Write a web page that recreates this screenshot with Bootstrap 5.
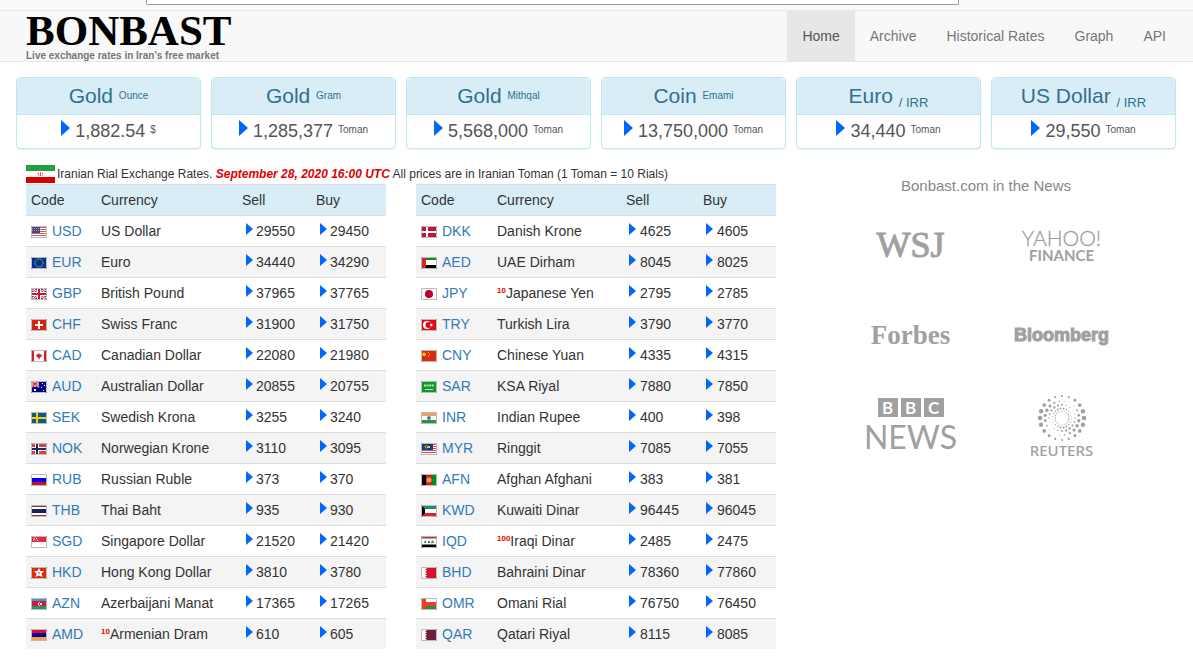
<!DOCTYPE html>
<html lang="en">
<head>
<meta charset="utf-8">
<meta name="viewport" content="width=device-width, initial-scale=1">
<title>Bonbast - Live exchange rates in Iran's free market</title>
<link href="https://cdn.jsdelivr.net/npm/bootstrap@5.3.0/dist/css/bootstrap.min.css" rel="stylesheet">
<style>
body { font: 14px/20px "Liberation Sans", Arial, sans-serif; color: #333; background: #fff; }
a { text-decoration: none; color: #337ab7; }
.page { padding: 0 12px 0 11px; }
.topstrip { height: 10px; background: #f9f9fb; }
.topstrip div { height: 5px; margin: 0 234px 0 146px; background: #fff; border: 1px solid #999; border-top: 0; border-radius: 0 0 2px 2px; }
.site-nav { background: #f8f8f8; border: solid #e7e7e7; border-width: 1px 0; }
.site-nav .nav-link { padding: 15px; color: #777; }
.site-nav .nav-link.active { background: #e7e7e7; color: #555; }
.brand { color: #000; padding-left: 15px; }
.brand:hover { color: #000; }
.brand-name { font: bold 43px/39px "Liberation Serif", serif; }
.brand-tag { font-size: 10px; line-height: 11px; font-weight: bold; color: #777; }
.rates { padding-top: 15px; }
.rates > div { padding: 0 5px; }
.rate { border: 1px solid #bce8f1; border-radius: 4px; box-shadow: 0 1px 1px rgba(0,0,0,.05); text-align: center; white-space: nowrap; }
.rate .card-header { background: #d9edf7; border-color: #bce8f1; color: #31708f; padding: 0; }
.rate .card-body { padding: 0; font-size: 18px; line-height: 33px; height: 33px; color: #555; }
.rate h2 { font-size: 21px; line-height: 36px; height: 36px; margin: 0; font-weight: normal; }
.hi, .lo { line-height: 10px; vertical-align: 4px; font-size: 10px; }
.lo { vertical-align: -4px; font-size: 13px; }
.tri { fill: #06f; }
.rate .tri { width: 9px; height: 16px; vertical-align: 1px; }
.caption-line { font-size: 12px; line-height: 20px; padding: 0 15px; margin-top: 15px; white-space: nowrap; }
.caption-line svg { width: 29px; height: 18px; margin-right: 2px; }
.caption-line em { color: #e00000; font-weight: bold; }
.gut { padding: 0 15px; }
.fx { table-layout: fixed; margin: 0; color: #333; line-height: 20px; white-space: nowrap; }
.fx > :not(caption) > * > * { padding: 5px; border: 0; border-top: 1px solid #ddd; box-shadow: none; font-weight: normal; color: #333; background: none; }
.fx > thead > tr > th { background: #d9edf7; }
.fx > tbody > tr:nth-child(even) > td { background: #f4f4f4; }
.fx .flag { width: 16px; height: 12px; margin-right: 5px; vertical-align: -2px; }
.fx .tri { width: 7px; height: 12px; margin: 0 3px 0 4px; vertical-align: 1px; }
.fx sup { font-size: 8px; line-height: 8px; color: #e00; font-weight: bold; top: 0; vertical-align: 5px; }
.c-code { width: 70px; } .c-cur { width: 141px; } .c-sell { width: 74px; }
.second .c-code { width: 76px; } .second .c-cur { width: 129px; } .second .c-sell { width: 77px; }
.second .tri { margin: 0 4px 0 3px; }
.news { color: #888; padding-top: 27px; }
.news h3 { font-size: 15px; line-height: 20px; margin: 0; }
.press { display: grid; grid-template-columns: 151px 151px; grid-auto-rows: 90px; justify-content: center; margin-top: 4px; }
.press a { color: #a0a0a0; display: flex; flex-direction: column; align-items: center; justify-content: center; }
.wsj { font: 36px/36px "Liberation Serif", serif; -webkit-text-stroke: 1px #a0a0a0; }
.yahoo { font: 300 21px/20px Lato, sans-serif; -webkit-text-stroke: .3px #a0a0a0; }
.finance { font: bold 15px/15px Lato, sans-serif; }
.forbes { font: bold 27px/28px "Liberation Serif", serif; }
.bloom { font: bold 18px/20px "Liberation Sans", sans-serif; -webkit-text-stroke: 1px #a0a0a0; }
.bbc { gap: 3px; }
.bbc span { width: 20px; background: #a0a0a0; color: #fff; font: bold 17px/19px Lato, sans-serif; text-align: center; }
.bbcnews { font: 32px/32px Lato, sans-serif; margin-top: 4px; }
.reuters { font: 500 15px/14px "Noto Sans", sans-serif; margin-top: 1px; }
</style>
</head>
<body>
<svg class="d-none" xmlns="http://www.w3.org/2000/svg">
  <symbol id="tri" viewBox="0 0 9 16" preserveAspectRatio="none"><path d="M0 0L9 8L0 16z"/></symbol>
  <symbol id="USD" viewBox="0 0 16 12"><path fill="#fff" d="M0 0h16v12H0z"/><path stroke="#d0616d" d="M0 1.5h16M0 3.5h16M0 5.5h16M0 7.5h16M0 9.5h16M0 11.5h16"/><path fill="#454577" d="M0 0h9v7H0z"/><path stroke="#99a" stroke-dasharray="1 1" d="M1 2.5h8M1 4.5h8"/></symbol>
  <symbol id="EUR" viewBox="0 0 16 12"><path fill="#003594" d="M0 0h16v12H0z"/><circle cx="8" cy="6" r="4" fill="none" stroke="#b9a93b" stroke-dasharray="1.5 .6"/></symbol>
  <symbol id="GBP" viewBox="0 0 16 12"><path fill="#284a8c" d="M0 0h16v12H0z"/><path stroke="#fff" stroke-width="2.500" d="M0 0l16 12M16 0L0 12"/><path stroke="#d02a3d" d="M0 0l16 12M16 0L0 12"/><path stroke="#fff" stroke-width="4" d="M8 0v12M0 6h16"/><path stroke="#d0142c" stroke-width="2" d="M8 0v12M0 6h16"/></symbol>
  <symbol id="CHF" viewBox="0 0 16 12"><path fill="#da2010" d="M0 0h16v12H0z"/><path stroke="#fff" stroke-width="2" d="M8 2v8M4 6h8"/></symbol>
  <symbol id="CAD" viewBox="0 0 16 12"><path fill="#fff" d="M0 0h16v12H0z"/><path fill="#e01a1a" d="M0 0h3v12H0zM13 0h3v12h-3zM8 3l1 1.500 2 0-.5 2-2 1.500v1.500h-1V8l-2-1.500L5 4.500l2 0z"/></symbol>
  <symbol id="AUD" viewBox="0 0 16 12"><path fill="#00008b" d="M0 0h16v12H0z"/><path stroke="#fff" stroke-width="2" d="M0 0l8 6M8 0L0 6M4 0v6M0 3h8"/><path stroke="#d22" d="M4 0v6M0 3h8M0 0l8 6M8 0L0 6"/><path fill="#fff" d="M3 8h2v2H3zM11 2h1v1h-1zM13 4h1v1h-1zM10 6h1v1h-1zM12 9h1v1h-1z"/></symbol>
  <symbol id="SEK" viewBox="0 0 16 12"><path fill="#0c5a8f" d="M0 0h16v12H0z"/><path stroke="#fc0" stroke-width="2" d="M6 0v12M0 6h16"/></symbol>
  <symbol id="NOK" viewBox="0 0 16 12"><path fill="#df3b42" d="M0 0h16v12H0z"/><path stroke="#fff" stroke-width="4" d="M6 0v12M0 6h16"/><path stroke="#143069" stroke-width="2" d="M6 0v12M0 6h16"/></symbol>
  <symbol id="RUB" viewBox="0 0 16 12"><path fill="#fff" d="M0 0h16v4H0z"/><path fill="#00f" d="M0 4h16v4H0z"/><path fill="#d40a20" d="M0 8h16v4H0z"/></symbol>
  <symbol id="THB" viewBox="0 0 16 12"><path fill="#fff" d="M0 0h16v12H0z"/><path stroke="#a52438" d="M0 1.500h16M0 10.500h16"/><path fill="#0f245c" d="M0 4h16v4H0z"/></symbol>
  <symbol id="SGD" viewBox="0 0 16 12"><path fill="#fff" d="M0 0h16v12H0z"/><path fill="#e8283c" d="M0 0h16v6H0z"/><path fill="none" stroke="#fff" d="M4 1.500q-3 1.500 0 3"/><path fill="#fff" d="M5 2h1v1H5zM6 4h1v1H6z"/></symbol>
  <symbol id="HKD" viewBox="0 0 16 12"><path fill="#e02a10" d="M0 0h16v12H0z"/><path fill="#fff" d="M8 1l1.500 3 3.500 0-2.500 2.500 1 3.500L8 8.500 4.500 10l1-3.500L3 4l3.500 0z"/><path fill="#e98" d="M7 5h2v2H7z"/></symbol>
  <symbol id="AZN" viewBox="0 0 16 12"><path fill="#2aa7c8" d="M0 0h16v4H0z"/><path fill="#dc1437" d="M0 3h16v5H0z"/><path fill="#26965a" d="M0 8h16v4H0z"/><path fill="none" stroke="#fff" d="M8.500 4.200q-3 1.800 0 3.600"/><path fill="#fff" d="M9 5h2v2H9z"/></symbol>
  <symbol id="AMD" viewBox="0 0 16 12"><path fill="#e01020" d="M0 0h16v4H0z"/><path fill="#0404b4" d="M0 4h16v4H0z"/><path fill="#f4a338" d="M0 8h16v4H0z"/></symbol>
  <symbol id="DKK" viewBox="0 0 16 12"><path fill="#c3143a" d="M0 0h16v12H0z"/><path stroke="#fff" stroke-width="2" d="M6 0v12M0 6h16"/></symbol>
  <symbol id="AED" viewBox="0 0 16 12"><path fill="#fff" d="M0 0h16v12H0z"/><path fill="#058a1c" d="M0 0h16v3H0z"/><path d="M0 8h16v4H0z"/><path fill="#d4232b" d="M0 0h5v12H0z"/></symbol>
  <symbol id="JPY" viewBox="0 0 16 12"><path fill="#fff" d="M0 0h16v12H0z"/><circle cx="8" cy="6" r="4" fill="#bc002d"/></symbol>
  <symbol id="TRY" viewBox="0 0 16 12"><path fill="#e30a17" d="M0 0h16v12H0z"/><circle cx="6" cy="6" r="4" fill="#fff"/><circle cx="7.500" cy="6" r="3" fill="#e30a17"/><path fill="#fff" d="M9 5l1 .3L11 4v1.600l1.500.4-1.500.5V8l-1-1.200L9 7z"/></symbol>
  <symbol id="CNY" viewBox="0 0 16 12"><path fill="#de2910" d="M0 0h16v12H0z"/><path fill="#ffd400" d="M3 2l1 1.500 1.500 0-1 1.500.5 1.500-2-1-1.500 1V4.500l-1-1 1.500 0zM7 2h1v1H7zM8 4h1v1H8zM7 6h1v1H7z"/></symbol>
  <symbol id="SAR" viewBox="0 0 16 12"><path fill="#0b9a2e" d="M0 0h16v12H0z"/><path stroke="#b9e2c0" stroke-width="2" stroke-dasharray="2 .6" d="M3 4.500h10"/><path stroke="#b9e2c0" d="M4 8.500h8"/></symbol>
  <symbol id="INR" viewBox="0 0 16 12"><path fill="#fff" d="M0 0h16v12H0z"/><path fill="#f0a064" d="M0 0h16v4H0z"/><path fill="#27963c" d="M0 8h16v4H0z"/><circle cx="8" cy="6" r="2" fill="#6a70b8"/></symbol>
  <symbol id="MYR" viewBox="0 0 16 12"><path fill="#fff" d="M0 0h16v12H0z"/><path stroke="#e34b55" d="M0 1.500h16M0 3.500h16M0 5.500h16M0 7.500h16M0 9.500h16M0 11.500h16"/><path fill="#103c8c" d="M0 0h12v7H0z"/><path fill="none" stroke="#fc0" d="M5.500 2q-3 1.500 0 3.500"/><path fill="#fc0" d="M6 3h3v2H6z"/></symbol>
  <symbol id="AFN" viewBox="0 0 16 12"><path d="M0 0h5v12H0z"/><path fill="#c9231c" d="M5 0h6v12H5z"/><path fill="#058a1c" d="M11 0h5v12h-5z"/><circle cx="8" cy="6" r="2.500" fill="#e9a35d"/></symbol>
  <symbol id="KWD" viewBox="0 0 16 12"><path fill="#fff" d="M0 0h16v12H0z"/><path fill="#1c8f6c" d="M0 0h16v4H0z"/><path fill="#d8203a" d="M0 8h16v4H0z"/><path d="M0 0l4 4v4l-4 4z"/></symbol>
  <symbol id="IQD" viewBox="0 0 16 12"><path fill="#fff" d="M0 0h16v12H0z"/><path fill="#b8303b" d="M0 0h16v2.500H0z"/><path d="M0 8.500h16V12H0z"/><path fill="#2a9a58" d="M3 6l2-2v3H3zM7 5h2v2H7zM10 6l2-2 1 3h-3z"/></symbol>
  <symbol id="BHD" viewBox="0 0 16 12"><path fill="#fff" d="M0 0h16v12H0z"/><path fill="#d4142c" d="M16 0H4l2 1.200-2 1.200 2 1.200-2 1.200L6 6 4 7.200l2 1.200-2 1.200 2 1.200L4 12h12z"/></symbol>
  <symbol id="OMR" viewBox="0 0 16 12"><path fill="#fff" d="M0 0h16v4H0z"/><path fill="#e8402c" d="M0 0h5v4h11v4H5v4H0z"/><path fill="#2f8a3a" d="M5 8h11v4H5z"/></symbol>
  <symbol id="QAR" viewBox="0 0 16 12"><path fill="#fff" d="M0 0h16v12H0z"/><path fill="#701c40" d="M16 0H4l2 1.200-2 1.200 2 1.200-2 1.200L6 6 4 7.200l2 1.200-2 1.200 2 1.200L4 12h12z"/></symbol>
</svg>

<div class="topstrip"><div></div></div>

<nav class="site-nav">
  <div class="page d-flex justify-content-between">
    <a class="brand" href="#">
      <div class="brand-name">BONBAST</div>
      <div class="brand-tag">Live exchange rates in Iran's free market</div>
    </a>
    <ul class="nav flex-nowrap">
      <li class="nav-item"><a class="nav-link active" aria-current="page" href="#">Home</a></li>
      <li class="nav-item"><a class="nav-link" href="#">Archive</a></li>
      <li class="nav-item"><a class="nav-link" href="#">Historical Rates</a></li>
      <li class="nav-item"><a class="nav-link" href="#">Graph</a></li>
      <li class="nav-item"><a class="nav-link" href="#">API</a></li>
    </ul>
  </div>
</nav>

<main class="page">
  <div class="row g-0 rates">
    <div class="col-2"><div class="card rate"><div class="card-header"><h2>Gold <span class="hi">Ounce</span></h2></div><div class="card-body"><svg class="tri"><use href="#tri"/></svg> 1,882.54 <span class="hi">$</span></div></div></div>
    <div class="col-2"><div class="card rate"><div class="card-header"><h2>Gold <span class="hi">Gram</span></h2></div><div class="card-body"><svg class="tri"><use href="#tri"/></svg> 1,285,377 <span class="hi">Toman</span></div></div></div>
    <div class="col-2"><div class="card rate"><div class="card-header"><h2>Gold <span class="hi">Mithqal</span></h2></div><div class="card-body"><svg class="tri"><use href="#tri"/></svg> 5,568,000 <span class="hi">Toman</span></div></div></div>
    <div class="col-2"><div class="card rate"><div class="card-header"><h2>Coin <span class="hi">Emami</span></h2></div><div class="card-body"><svg class="tri"><use href="#tri"/></svg> 13,750,000 <span class="hi">Toman</span></div></div></div>
    <div class="col-2"><div class="card rate"><div class="card-header"><h2>Euro <span class="lo">/ IRR</span></h2></div><div class="card-body"><svg class="tri"><use href="#tri"/></svg> 34,440 <span class="hi">Toman</span></div></div></div>
    <div class="col-2"><div class="card rate"><div class="card-header"><h2>US Dollar <span class="lo">/ IRR</span></h2></div><div class="card-body"><svg class="tri"><use href="#tri"/></svg> 29,550 <span class="hi">Toman</span></div></div></div>
  </div>

  <div class="row g-0">
    <div class="col-8">
      <div class="caption-line d-flex align-items-center">
        <svg viewBox="0 0 29 18"><path fill="#fff" d="M0 0h29v18H0z"/><path fill="#239f40" d="M0 0h29v6H0z"/><path fill="#da0000" d="M0 12h29v6H0z"/><path fill="none" stroke="#e4555b" d="M12.500 7.500q-1.500 2 1 3.200M16.500 7.500q1.500 2-1 3.200M14.500 7v4"/></svg>
        <span>Iranian Rial Exchange Rates. <em>September 28, 2020 16:00 UTC</em> All prices are in Iranian Toman (1 Toman = 10 Rials)</span>
      </div>
      <div class="row g-0">
        <div class="col-6 gut">
          <table class="table fx">
            <thead><tr><th class="c-code">Code</th><th class="c-cur">Currency</th><th class="c-sell">Sell</th><th>Buy</th></tr></thead>
            <tbody id="left"></tbody>
          </table>
        </div>
        <div class="col-6 gut">
          <table class="table fx second">
            <thead><tr><th class="c-code">Code</th><th class="c-cur">Currency</th><th class="c-sell">Sell</th><th>Buy</th></tr></thead>
            <tbody id="right"></tbody>
          </table>
        </div>
      </div>
    </div>
    <div class="col-4">
      <section class="news">
        <h3 class="text-center fw-normal">Bonbast.com in the News</h3>
        <div class="press">
          <a href="#"><span class="wsj">WSJ</span></a>
          <a href="#"><span class="yahoo">YAHOO!</span><span class="finance">FINANCE</span></a>
          <a href="#"><span class="forbes">Forbes</span></a>
          <a href="#"><span class="bloom">Bloomberg</span></a>
          <a href="#"><span class="bbc d-flex"><span>B</span><span>B</span><span>C</span></span><span class="bbcnews">NEWS</span></a>
          <a href="#"><svg id="dots" width="50" height="48" viewBox="-25 -24 50 48" fill="#a0a0a0"></svg><span class="reuters">REUTERS</span></a>
        </div>
      </section>
    </div>
  </div>
</main>

<script src="https://cdn.jsdelivr.net/npm/bootstrap@5.3.0/dist/js/bootstrap.bundle.min.js"></script>
<script>
// code, currency, sell, buy, units the price is quoted for (when not 1)
const left = [
  ['USD','US Dollar',29550,29450],['EUR','Euro',34440,34290],['GBP','British Pound',37965,37765],
  ['CHF','Swiss Franc',31900,31750],['CAD','Canadian Dollar',22080,21980],['AUD','Australian Dollar',20855,20755],
  ['SEK','Swedish Krona',3255,3240],['NOK','Norwegian Krone',3110,3095],['RUB','Russian Ruble',373,370],
  ['THB','Thai Baht',935,930],['SGD','Singapore Dollar',21520,21420],['HKD','Hong Kong Dollar',3810,3780],
  ['AZN','Azerbaijani Manat',17365,17265],['AMD','Armenian Dram',610,605,10]];
const right = [
  ['DKK','Danish Krone',4625,4605],['AED','UAE Dirham',8045,8025],['JPY','Japanese Yen',2795,2785,10],
  ['TRY','Turkish Lira',3790,3770],['CNY','Chinese Yuan',4335,4315],['SAR','KSA Riyal',7880,7850],
  ['INR','Indian Rupee',400,398],['MYR','Ringgit',7085,7055],['AFN','Afghan Afghani',383,381],
  ['KWD','Kuwaiti Dinar',96445,96045],['IQD','Iraqi Dinar',2485,2475,100],['BHD','Bahraini Dinar',78360,77860],
  ['OMR','Omani Rial',76750,76450],['QAR','Qatari Riyal',8115,8085]];
const tri = '<svg class="tri"><use href="#tri"/></svg>';
const row = ([code, name, sell, buy, units]) => `<tr>
  <td><svg class="flag" viewBox="0 0 16 12"><use href="#${code}" width="16" height="12"/><path d="M.5.5h15v11H.5z" fill="none" stroke="#bbb"/></svg><a href="#">${code}</a></td>
  <td>${units ? `<sup>${units}</sup>` : ''}${name}</td><td>${tri}${sell}</td><td>${tri}${buy}</td></tr>`;
document.getElementById('left').innerHTML = left.map(row).join('');
document.getElementById('right').innerHTML = right.map(row).join('');

// Concentric rings of dots: the outer ones are largest at the sides,
// the inner ones at top and bottom
let dots = '';
[[7, .5, .2, 0], [9.5, .4, .6, 1.4], [13, .4, .8, 1], [17, .4, 1.3, .4], [22, 1, 1.3, 0]].forEach(([r, base, extra, turn], ring) => {
  for (let k = 0; k < 20; k++) {
    const a = (k + (ring % 2) / 2) * Math.PI / 10;
    const size = base + extra * Math.cos(a - turn) ** 2;
    dots += `<circle cx="${(r * Math.cos(a)).toFixed(1)}" cy="${(r * Math.sin(a)).toFixed(1)}" r="${size.toFixed(2)}"/>`;
  }
});
document.getElementById('dots').innerHTML = dots;
</script>
</body>
</html>
